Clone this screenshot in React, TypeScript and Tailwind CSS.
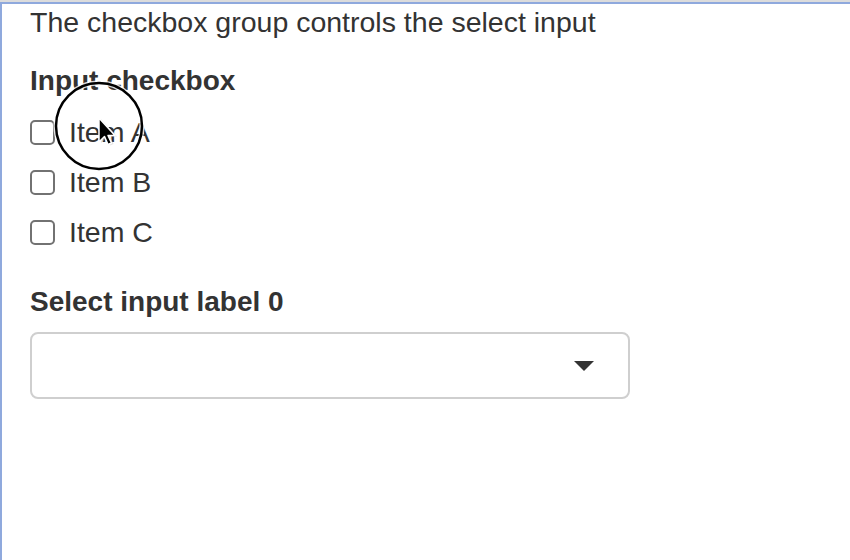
import React from "react";

const items = ["Item A", "Item B", "Item C"];

const CursorOverlay: React.FC = () => {
  return (
    <svg
      className="absolute left-[48px] top-[73px] pointer-events-none"
      width="100"
      height="100"
      viewBox="0 0 100 100"
    >
      <circle cx="49" cy="49" r="43" fill="none" stroke="#ffffff" strokeWidth="5" opacity="0.8" />
      <circle cx="49" cy="49" r="43" fill="none" stroke="#000000" strokeWidth="2.5" />
      <path
        d="M51 42 L51 66 L56.5 60.5 L60 68.5 L63.5 67 L60 59.5 L67 59.5 Z"
        fill="#d0d0d0"
        opacity="0.6"
      />
      <path
        d="M49 41 L49 65 L54.5 59.5 L58 67.5 L61.5 66 L58 58.5 L65 58.5 Z"
        fill="#000000"
        stroke="#ffffff"
        strokeWidth="1.5"
        strokeLinejoin="round"
      />
    </svg>
  );
};

const App: React.FC = () => {
  return (
    <div className="w-[850px] h-[560px] bg-white border-t-2 border-[#dcdcdc] overflow-hidden">
      <div
        className="relative h-full border-t-2 border-l-2 border-[#8fa9dd] pl-[28px] text-[#333333] text-[28.5px]"
        style={{ fontFamily: '"Liberation Sans", Arial, sans-serif' }}
      >
        <p className="leading-[36px]">The checkbox group controls the select input</p>

        <div className="mt-[21px] flex flex-col">
          <h2 className="font-bold text-[28px] leading-[40px]">Input checkbox</h2>
          <div className="mt-[6px] flex flex-col">
            {items.map((item) => (
              <label key={item} className="h-[50px] flex items-center gap-[14px]">
                <span className="w-[25px] h-[25px] rounded-[5px] border-2 border-[#727272] bg-white" />
                <span className="leading-[40px]">{item}</span>
              </label>
            ))}
          </div>
        </div>

        <div className="mt-[25px] flex flex-col">
          <h2 className="font-bold text-[28px] leading-[40px]">Select input label 0</h2>
          <div className="mt-[10px] w-[600px] h-[67px] rounded-[8px] border-2 border-[#cfcfcf] bg-white flex items-center justify-end pr-[34px]">
            <svg width="20" height="10" viewBox="0 0 20 10">
              <path d="M0 0 L20 0 L10 10 Z" fill="#333333" />
            </svg>
          </div>
        </div>

        <CursorOverlay />
      </div>
    </div>
  );
};

export default App;
